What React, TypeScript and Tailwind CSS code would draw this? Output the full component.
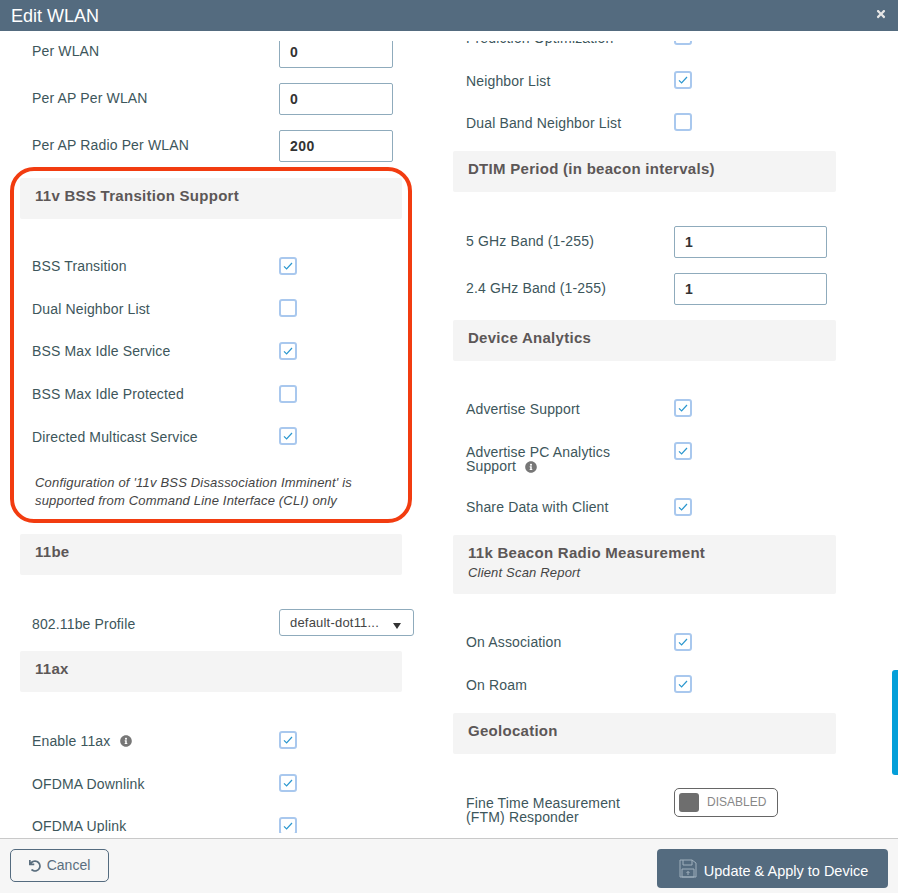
import React from "react";
import { FaInfoCircle, FaTimes, FaUndo } from "react-icons/fa";

const font = { fontFamily: '"Liberation Sans", Arial, sans-serif' };

function Box({ checked }: { checked?: boolean }) {
  return (
    <span className="flex h-[18px] w-[18px] shrink-0 items-center justify-center rounded-[3px] border-2 border-[#a9c8ee] bg-white">
      {checked && (
        <svg width="10" height="8" viewBox="0 0 10 8" fill="none">
          <path d="M1 4.4 L3.6 7 L9 1" stroke="#2b97cf" strokeWidth="1.2" />
        </svg>
      )}
    </span>
  );
}

function Title({ children, sub, className }: { children: React.ReactNode; sub?: string; className: string }) {
  return (
    <div className={`rounded-[2px] bg-[#f4f4f4] px-[15px] pt-[9px] ${className}`}>
      <div className="text-[15px] leading-[18px] font-bold tracking-[0.28px] text-[#5c5757]">{children}</div>
      {sub && <div className="mt-[2px] text-[13px] leading-[18px] tracking-[0.18px] text-[#444] italic">{sub}</div>}
    </div>
  );
}

function Row({ label, checked, className, col, info, labelClass = "pt-[1px]" }: { label: React.ReactNode; checked?: boolean; className: string; col: string; info?: boolean; labelClass?: string }) {
  return (
    <div className={`flex h-[18px] items-center ${col === R ? "pl-[13px]" : "pl-[12px]"} ${className}`}>
      <div className={`flex shrink-0 items-center text-[14px] leading-[14px] tracking-[0.15px] text-[#3d565b] ${labelClass} ${col}`}>
        {label}
        {info && <FaInfoCircle className="ml-[10px] text-[12px] text-[#777]" />}
      </div>
      <Box checked={checked} />
    </div>
  );
}

function Field({ label, value, className, col, w }: { label: string; value: string; className: string; col: string; w: string }) {
  return (
    <div className={`flex h-[32px] items-center ${col === R ? "pl-[13px]" : "pl-[12px]"} ${className}`}>
      <div className={`shrink-0 pb-[2px] text-[14px] leading-[14px] tracking-[0.15px] text-[#3d565b] ${col}`}>{label}</div>
      <div className={`flex h-[32px] items-center rounded-[2px] border border-[#8fabbc] bg-white pl-[10px] text-[14px] font-bold tracking-[0.5px] text-[#333] ${w}`}>{value}</div>
    </div>
  );
}

const L = "w-[247px]";
const R = "w-[208px]";

export default function App() {
  return (
    <div className="relative h-[894px] w-[898px] overflow-hidden bg-white" style={font}>
      <header className="flex h-[31px] items-center justify-between bg-[#546b7f] pr-[11px] pl-[11px] text-white">
        <span className="text-[18px] leading-[28px]">Edit WLAN</span>
        <FaTimes className="mb-[4px] text-[12px] text-[#e6e6e6]" />
      </header>

      <div className="mt-[10px] h-[792px] overflow-hidden">
        <div className="-mt-[21px] flex pl-[20px]">
          <div className="w-[382px] shrink-0">
            <Field label="Per WLAN" value="0" className="mt-[16px]" col={L} w="w-[114px]" />
            <Field label="Per AP Per WLAN" value="0" className="mt-[15px]" col={L} w="w-[114px]" />
            <Field label="Per AP Radio Per WLAN" value="200" className="mt-[15px]" col={L} w="w-[114px]" />
            <Title className="mt-[16px] h-[41px]">11v BSS Transition Support</Title>
            <Row label="BSS Transition" checked className="mt-[38px]" col={L} labelClass="pt-0" />
            <Row label="Dual Neighbor List" className="mt-[24px]" col={L} />
            <Row label="BSS Max Idle Service" checked className="mt-[25px]" col={L} labelClass="pt-0" />
            <Row label="BSS Max Idle Protected" className="mt-[25px]" col={L} labelClass="pt-0" />
            <Row label="Directed Multicast Service" checked className="mt-[24px]" col={L} />
            <div className="mt-[29px] pl-[15px] text-[13px] leading-[18px] tracking-[0.18px] text-[#444] italic">
              Configuration of '11v BSS Disassociation Imminent' is
              <br />
              supported from Command Line Interface (CLI) only
            </div>
            <Title className="mt-[24px] h-[41px]">11be</Title>
            <div className="mt-[34px] flex h-[27px] items-center pl-[12px]">
              <div className={`shrink-0 pt-[2px] text-[14px] leading-[14px] tracking-[0.15px] text-[#3d565b] ${L}`}>802.11be Profile</div>
              <div className="relative flex h-[27px] w-[135px] shrink-0 items-center rounded-[3px] border border-[#8fabbc] pl-[10px] text-[13px] tracking-[0.2px] text-[#444]">
                default-dot11...
                <span className="absolute top-[13px] right-[12px] h-0 w-0 border-x-[4px] border-t-[6px] border-x-transparent border-t-[#333]" />
              </div>
            </div>
            <Title className="mt-[15px] h-[41px]">11ax</Title>
            <Row label="Enable 11ax" info checked className="mt-[39px]" col={L} />
            <Row label="OFDMA Downlink" checked className="mt-[25px]" col={L} />
            <Row label="OFDMA Uplink" checked className="mt-[25px]" col={L} labelClass="pt-0" />
          </div>

          <div className="ml-[51px] w-[383px] shrink-0">
            <Row label="Prediction Optimization" className="mt-[7px]" col={R} labelClass="pt-[4px]" />
            <Row label="Neighbor List" checked className="mt-[26px]" col={R} />
            <Row label="Dual Band Neighbor List" className="mt-[24px]" col={R} />
            <Title className="mt-[20px] h-[41px]">DTIM Period (in beacon intervals)</Title>
            <Field label="5 GHz Band (1-255)" value="1" className="mt-[34px]" col={R} w="w-[153px]" />
            <Field label="2.4 GHz Band (1-255)" value="1" className="mt-[15px]" col={R} w="w-[153px]" />
            <Title className="mt-[15px] h-[41px]">Device Analytics</Title>
            <Row label="Advertise Support" checked className="mt-[38px]" col={R} />
            <div className="mt-[25px] flex items-start pl-[13px]">
              <div className={`shrink-0 pt-[3px] text-[14px] leading-[14px] tracking-[0.15px] text-[#3d565b] ${R}`}>
                Advertise PC Analytics
                <br />
                Support
                <FaInfoCircle className="mb-[1px] ml-[9px] inline text-[12px] text-[#777]" />
              </div>
              <Box checked />
            </div>
            <Row label="Share Data with Client" checked className="mt-[24px]" col={R} />
            <Title sub="Client Scan Report" className="mt-[19px] h-[59px]">11k Beacon Radio Measurement</Title>
            <Row label="On Association" checked className="mt-[39px]" col={R} />
            <Row label="On Roam" checked className="mt-[24px]" col={R} labelClass="pt-[2px]" />
            <Title className="mt-[20px] h-[41px]">Geolocation</Title>
            <div className="mt-[34px] flex items-start pl-[13px]">
              <div className={`shrink-0 pt-[8px] text-[14px] leading-[14px] tracking-[0.15px] text-[#3d565b] ${R}`}>
                Fine Time Measurement
                <br />
                (FTM) Responder
              </div>
              <div className="flex h-[29px] w-[104px] items-center rounded-[5px] border border-[#666] pl-[4px]">
                <span className="h-[19px] w-[20px] rounded-[3px] bg-[#6e6e6e]" />
                <span className="ml-[8px] text-[12px] text-[#888]">DISABLED</span>
              </div>
            </div>
          </div>
        </div>
      </div>

      <footer className="mt-[5px] flex h-[55px] items-start justify-between border-t border-[#c9c9c9] bg-[#f6f6f6] pt-[10px] pr-[10px] pl-[10px]">
        <button className="flex h-[33px] w-[99px] items-center justify-center gap-[6px] rounded-[5px] border border-[#546b7f] text-[14px] text-[#5a6e7e]">
          <FaUndo className="text-[12px]" />
          Cancel
        </button>
        <button className="flex h-[39px] w-[231px] items-center justify-center gap-[7px] rounded-[4px] bg-[#546b7f] pl-[2px] text-[14.5px] text-white">
          <svg width="18" height="19" viewBox="0 0 18 19" fill="none" stroke="#9fb0bd" strokeWidth="1">
            <path d="M1 1 H13 L17 4 V18 H1 Z" />
            <path d="M4 1 V6 H13 V1" />
            <path d="M3 10 H15 V18 H3 Z" />
            <path d="M9 16 V12.5 M7.5 14 L9 12.5 L10.5 14" />
          </svg>
          <span className="mt-[7px]">Update &amp; Apply to Device</span>
        </button>
      </footer>

      <div className="absolute top-[167px] left-[10px] h-[356px] w-[402px] rounded-[24px] border-4 border-[#f23c10]" />
      <div className="absolute top-[670px] right-0 h-[105px] w-[6px] rounded-l-[3px] bg-[#049fd9]" />
    </div>
  );
}
